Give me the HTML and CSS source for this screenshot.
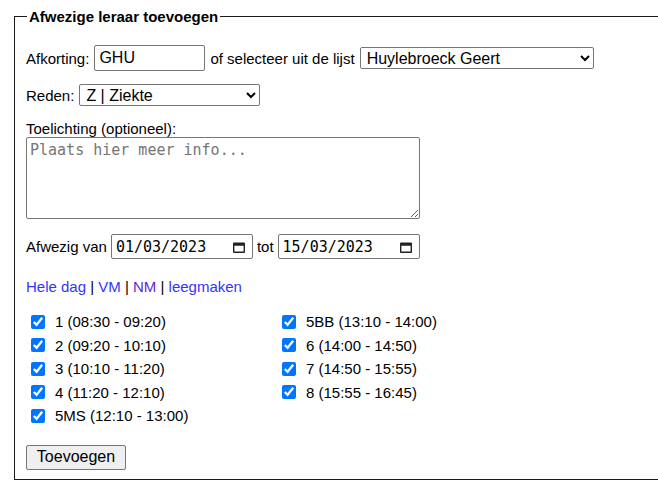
FILE: index.html
```html
<!DOCTYPE html>
<html lang="nl">
<head>
<meta charset="utf-8">
<title>Afwezige leraar toevoegen</title>
<link rel="stylesheet" href="styles.css">
</head>
<body>
<form class="page">
  <fieldset class="box">
    <legend class="box-title">Afwezige leraar toevoegen</legend>

    <div class="row row-teacher">
      <label for="afk">Afkorting:</label>
      <input id="afk" class="field field-code" type="text" value="GHU">
      <span>of selecteer uit de lijst</span>
      <select class="field field-select field-teacher">
        <option>Huylebroeck Geert</option>
      </select>
    </div>

    <div class="row row-reason">
      <label>Reden:</label>
      <select class="field field-select field-reason">
        <option>Z | Ziekte</option>
      </select>
    </div>

    <div class="notes">
      <label for="notes">Toelichting (optioneel):</label>
      <textarea id="notes" class="field field-notes" placeholder="Plaats hier meer info..."></textarea>
    </div>

    <div class="row row-dates">
      <span>Afwezig van</span>
      <span class="field field-date">
        <input class="date-text" type="text" value="01/03/2023">
        <svg class="date-icon" width="14" height="14" viewBox="0 0 14 14"><path d="M2 2.5h10a1 1 0 0 1 1 1v8.5a1 1 0 0 1-1 1H2a1 1 0 0 1-1-1V3.5a1 1 0 0 1 1-1z M2.4 5.8v5.8h9.2V5.8z" fill="#222" fill-rule="evenodd"/></svg>
      </span>
      <span>tot</span>
      <span class="field field-date">
        <input class="date-text" type="text" value="15/03/2023">
        <svg class="date-icon" width="14" height="14" viewBox="0 0 14 14"><path d="M2 2.5h10a1 1 0 0 1 1 1v8.5a1 1 0 0 1-1 1H2a1 1 0 0 1-1-1V3.5a1 1 0 0 1 1-1z M2.4 5.8v5.8h9.2V5.8z" fill="#222" fill-rule="evenodd"/></svg>
      </span>
    </div>

    <div class="quick">
      <a href="#" class="link">Hele dag</a> | <a href="#" class="link">VM</a> | <a href="#" class="link link-visited">NM</a> | <a href="#" class="link">leegmaken</a>
    </div>

    <div class="hours">
      <label class="hour"><input type="checkbox" checked> <span>1 (08:30 - 09:20)</span></label>
      <label class="hour"><input type="checkbox" checked> <span>5BB (13:10 - 14:00)</span></label>
      <label class="hour"><input type="checkbox" checked> <span>2 (09:20 - 10:10)</span></label>
      <label class="hour"><input type="checkbox" checked> <span>6 (14:00 - 14:50)</span></label>
      <label class="hour"><input type="checkbox" checked> <span>3 (10:10 - 11:20)</span></label>
      <label class="hour"><input type="checkbox" checked> <span>7 (14:50 - 15:55)</span></label>
      <label class="hour"><input type="checkbox" checked> <span>4 (11:20 - 12:10)</span></label>
      <label class="hour"><input type="checkbox" checked> <span>8 (15:55 - 16:45)</span></label>
      <label class="hour"><input type="checkbox" checked> <span>5MS (12:10 - 13:00)</span></label>
    </div>

    <div class="actions">
      <button type="button" class="btn">Toevoegen</button>
    </div>
  </fieldset>
</form>
</body>
</html>
```
FILE: styles.css
```css
html, body {
  margin: 0;
  padding: 0;
  background: #fff;
  overflow: hidden;
}

body {
  font-family: "Liberation Sans", Arial, sans-serif;
  font-size: 15px;
  color: #000;
}

.page {
  padding: 8px 0 0 14px;
}

.box {
  margin: 0;
  width: 644px;
  border: 1px solid #1a1a1a;
  border-right: none;
  padding: 20px 11px 9px 11px;
  box-sizing: border-box;
  height: 472px;
}

.box-title {
  font-weight: bold;
  font-size: 15px;
  padding: 0 2px;
  margin-left: 1px;
}

.row {
  display: flex;
  align-items: center;
  gap: 5px;
  white-space: nowrap;
}

.field {
  font-family: "Liberation Sans", Arial, sans-serif;
  font-size: 16px;
  color: #000;
  border: 1px solid #767676;
  border-radius: 2px;
  background: #fff;
  box-sizing: border-box;
  margin: 0;
}

.field-code {
  width: 111px;
  height: 26px;
  padding: 1px 4px;
}

.field-select {
  height: 22px;
  padding: 0 0 0 2px;
}

.field-teacher {
  width: 234px;
}

.row-reason {
  margin-top: 13px;
}

.field-reason {
  width: 181px;
}

.notes {
  display: flex;
  flex-direction: column;
  align-items: flex-start;
  margin-top: 14px;
}

.notes label {
  line-height: 17px;
}

.field-notes {
  width: 394px;
  height: 82px;
  font-family: "DejaVu Sans Mono", "Liberation Mono", monospace;
  font-size: 15px;
  padding: 3px 3px;
  resize: both;
}

.field-notes::placeholder {
  color: #757575;
}

.row-dates {
  margin-top: 15px;
  gap: 4px;
}

.field-date {
  display: inline-flex;
  align-items: center;
  width: 142px;
  height: 25px;
  padding: 0 6px 0 4px;
}

.date-text {
  flex: 1;
  min-width: 0;
  border: 0;
  padding: 0;
  margin: 0;
  font-family: "DejaVu Sans Mono", "Liberation Mono", monospace;
  font-size: 15px;
  color: #000;
  outline: none;
  background: transparent;
}

.date-icon {
  flex: none;
}

.quick {
  margin-top: 19px;
  line-height: 17px;
}

.link {
  color: #3434ff;
  text-decoration: none;
}

.link-visited {
  color: #5a2ad6;
}

.hours {
  display: grid;
  grid-template-columns: 251px auto;
  grid-auto-rows: 23.5px;
  margin-top: 15px;
  width: 520px;
}

.hour {
  display: flex;
  align-items: center;
  gap: 10px;
}

.hour input {
  width: 14px;
  height: 14px;
  margin: 0 0 0 5px;
  accent-color: #0075ff;
}

.actions {
  margin-top: 17px;
}

.btn {
  font-family: "Liberation Sans", Arial, sans-serif;
  font-size: 16px;
  color: #000;
  width: 100px;
  height: 25px;
  padding: 0;
  border: 1px solid #767676;
  border-radius: 2px;
  background: #efefef;
}
```
